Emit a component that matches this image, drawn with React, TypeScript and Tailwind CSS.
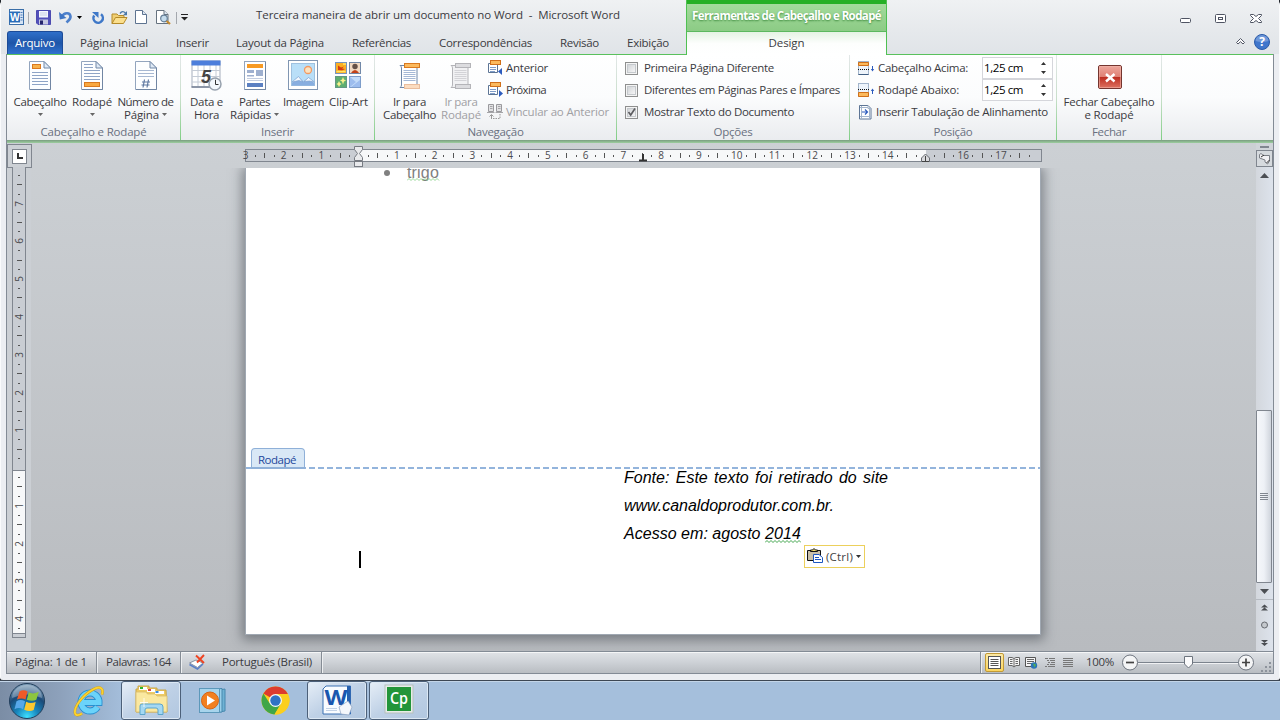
import { useLayoutEffect, useRef, type ReactNode } from "react";

/** One line of text whose letter spacing is adjusted to span `w` pixels. */
function Fit({ w, className = "", children }: { w: number; className?: string; children: string }) {
  const ref = useRef<HTMLSpanElement>(null);
  useLayoutEffect(() => {
    const el = ref.current;
    if (!el) return;
    el.style.letterSpacing = "0px";
    const natural = el.getBoundingClientRect().width;
    el.style.letterSpacing = `${(w - natural) / children.length}px`;
  }, [w, children]);
  return (
    <span ref={ref} className={`inline-block whitespace-pre ${className}`}>
      {children}
    </span>
  );
}

function Down({ className = "text-[#666]" }: { className?: string }) {
  return (
    <svg width="5" height="3" viewBox="0 0 5 3" className={className}>
      <path d="M0 0h5L2.5 3z" fill="currentColor" />
    </svg>
  );
}

/* ---------- quick access icons ---------- */

function WordMini() {
  return (
    <svg width="17" height="17" viewBox="0 0 17 17">
      <rect x="1.5" y="0.5" width="14" height="15" fill="#fff" stroke="#3a6ea8" />
      <path d="M12 1h3v14h-3z" fill="#d5e3f4" />
      <path d="M12.5 3.5h2M12.5 6h2M12.5 8.500h2M12.500 11h2" stroke="#4d7fbd" />
      <rect x="1.500" y="2.500" width="10.500" height="11" fill="#2a6dba" />
      <text x="6.800" y="12" fontSize="10" fontWeight="700" fill="#fff" textAnchor="middle" fontFamily="Open Sans, sans-serif">W</text>
    </svg>
  );
}
function SaveIcon() {
  return (
    <svg width="15" height="15" viewBox="0 0 15 15">
      <path d="M.5.5h14v14H2L.5 13z" fill="#5250ba" stroke="#4c4ab0" />
      <rect x="3" y="1" width="9" height="6.500" fill="#f4f6fd" />
      <path d="M4 3h7M4 5h7" stroke="#c9cfe6" />
      <rect x="3" y="9.500" width="9" height="5" fill="#c5c7e2" />
      <rect x="4" y="10.500" width="3" height="4" fill="#24236c" />
    </svg>
  );
}
function UndoIcon() {
  return (
    <svg width="14" height="13" viewBox="0 0 14 13">
      <path d="M3 5.500C5 1.500 11 1 11.500 5.500C11.700 8.500 9 10 7.500 11.500" fill="none" stroke="#4d80cb" strokeWidth="2.600" />
      <path d="M0 1l.8 7.500L7.500 7z" fill="#3f75c4" />
    </svg>
  );
}
function RedoIcon() {
  return (
    <svg width="14" height="14" viewBox="0 0 14 14">
      <path d="M10 3.300A4.700 4.700 0 1 1 3.200 4.500" fill="none" stroke="#3f78c8" strokeWidth="2.500" />
      <path d="M1 1h6.500v6z" fill="#3f78c8" />
    </svg>
  );
}
function OpenIcon() {
  return (
    <svg width="17" height="15" viewBox="0 0 17 15">
      <path d="M1 13.500V4h5l1.500 1.500H13V8" fill="#f0cf73" stroke="#b58a29" />
      <path d="M1 13.500L4.500 7.500H16L12.500 13.500z" fill="#fbdf8d" stroke="#b58a29" />
      <path d="M9 3.500Q11.500 0 14.500 3" fill="none" stroke="#4b78a8" strokeWidth="1.300" />
      <path d="M16 1v4.200h-4z" fill="#4b78a8" />
    </svg>
  );
}
function NewIcon() {
  return (
    <svg width="12" height="15" viewBox="0 0 12 15">
      <path d="M.5.5h7L11.500 4.500v9H.5z" fill="#fff" stroke="#5d7390" />
      <path d="M7.500.5v4h4" fill="#dce6f1" stroke="#5d7390" />
    </svg>
  );
}
function PreviewIcon() {
  return (
    <svg width="15" height="15" viewBox="0 0 15 15">
      <path d="M.5.5h7.500L12 4.500v9H.5z" fill="#fff" stroke="#66727f" />
      <path d="M8 .5v4h4" fill="#dce6f1" stroke="#66727f" />
      <circle cx="8" cy="8.500" r="3.300" fill="#c5dced" stroke="#647e97" strokeWidth="1.200" />
      <path d="M10.500 11l3.500 3" stroke="#c48a2f" strokeWidth="2.300" />
    </svg>
  );
}

/* ---------- ribbon icons ---------- */

function PageIcon({ kind }: { kind: "head" | "foot" | "num" }) {
  return (
    <svg width="24" height="31" viewBox="0 0 24 31">
      <path d="M1.500 1.500H16l6.500 6.500v21.500h-21z" fill="#fdfeff" stroke="#93a5be" />
      <path d="M22.500 8v21.500H2" fill="none" stroke="#7186a3" />
      <path d="M16 1.500V8h6.500z" fill="#dfe9f5" stroke="#7389a7" />
      {kind === "head" && (
        <>
          <rect x="4.500" y="4.500" width="8" height="4" fill="#f9b24b" stroke="#d97a20" />
          <path d="M4 12.500h16M4 15.500h16M4 18.500h16M4 21.500h16M4 24.500h16" stroke="#8ea4c6" />
        </>
      )}
      {kind === "foot" && (
        <>
          <path d="M4 4.500h9M4 7.500h9M4 10.500h16M4 13.500h16M4 16.500h16M4 19.500h16" stroke="#8ea4c6" />
          <rect x="4.500" y="22.500" width="15" height="4" fill="#f9a840" stroke="#d97a20" />
        </>
      )}
      {kind === "num" && (
        <>
          <path d="M4 10.500h16M4 13.500h16M4 16.500h16" stroke="#a7b8d2" />
          <path d="M10.500 19.500l-1.500 8M14.500 19.500l-1.500 8M8 22h8M7.500 25h8" stroke="#6079a1" strokeWidth="1.200" />
        </>
      )}
    </svg>
  );
}
function CalendarIcon() {
  return (
    <svg width="31" height="31" viewBox="0 0 31 31">
      <rect x="1" y="1" width="28" height="26" fill="#fff" stroke="#a5aebc" />
      <path d="M1 10.500h28M1 16.500h28M1 22h28M7 5v22M13 5v22M19 5v22M25 5v22" stroke="#c5ccd6" />
      <path d="M.5.5h29v5H.5z" fill="#4d7edb" />
      <path d="M.5 27h20" stroke="#68748a" strokeWidth="1.300" />
      <text x="15" y="22.500" fontSize="18" fontWeight="700" fontStyle="italic" fill="#444" textAnchor="middle" fontFamily="Liberation Sans, sans-serif">5</text>
      <circle cx="24" cy="24" r="6" fill="#f3f8fc" stroke="#97a1ad" strokeWidth="1.500" />
      <path d="M24.500 19.800V24.500h3" fill="none" stroke="#333" />
    </svg>
  );
}
function PartsIcon() {
  return (
    <svg width="24" height="31" viewBox="0 0 24 31">
      <rect x="1.500" y="1.500" width="21" height="28" fill="#fff" stroke="#93a5be" />
      <path d="M22.500 2v27.500H2" fill="none" stroke="#7186a3" />
      <rect x="4" y="4" width="16" height="4" fill="#f79a24" />
      <path d="M4 10h7v3H4zM4 15h7v1.500H4zM13 10h7v6h-7z" fill="#9fb0cf" />
      <path d="M4 18.500h16M4 20.500h16" stroke="#c3cde0" />
      <rect x="4" y="23" width="16" height="4" fill="#5b80c2" />
    </svg>
  );
}
function ImageIcon() {
  return (
    <svg width="31" height="31" viewBox="0 0 31 31">
      <rect x=".5" y=".5" width="29" height="29" fill="#fff" stroke="#8096b2" />
      <rect x="3.500" y="3.500" width="23" height="22" fill="#b9dff8" stroke="#9fc1df" />
      <circle cx="20" cy="10" r="3.500" fill="#fbe3c0" stroke="#f39a62" strokeWidth="1.300" />
      <path d="M4 23l6.500-6 5 4.500 5-4 6 6v2H4z" fill="#88aee0" />
      <path d="M4 22l6.500-5.500 4.500 5.500-4-1.500zM16 21.500l4.500-4 6 4.500-5-1z" fill="#f2f8fe" stroke="#7ba0d0" strokeWidth=".7" />
    </svg>
  );
}
function ClipArtIcon() {
  return (
    <svg width="27" height="27" viewBox="0 0 27 27">
      <rect x=".5" y=".5" width="11" height="11" fill="#fbae22" stroke="#7794bd" />
      <path d="M3 3.500l3 2 3-1-2 2 3 .5-3 1.500-4-.5z" fill="#d43c13" />
      <path d="M1.500 9.500h9M8 2h3" stroke="#ffe464" strokeWidth="1.500" />
      <rect x="14.500" y=".5" width="11" height="11" fill="#f2d9c2" stroke="#7188a8" />
      <circle cx="20" cy="4.500" r="2.700" fill="#655047" />
      <path d="M16 11q4-6 8 0z" fill="#c34218" />
      <rect x=".5" y="14.500" width="11" height="11" fill="#5fae70" stroke="#629884" />
      <path d="M8 15l1 2.500 2 1-2 1-1 3-1-3-2-1 2-1zM4 19l1 2 1.500 1-1.500 1-1 2-1-2-1.500-1 1.500-1z" fill="#f9f28c" />
      <rect x="14.500" y="14.500" width="11" height="11" fill="#c3dcf9" stroke="#7d9dca" />
      <path d="M15 15l6 5-6 5zM25 18v7h-9z" fill="#9dbdee" />
    </svg>
  );
}
function GoIcon({ off }: { off?: boolean }) {
  const [line, edge, bar, fill] = off
    ? ["#cbcbcf", "#b4b4b8", "#b4b4b8", "#dcdcdf"]
    : ["#8fa7cb", "#6e87a8", "#d97a20", "#fbb95d"];
  return (
    <svg width="22" height="28" viewBox="0 0 22 28">
      <path d="M1 2.500h17v22H1q1.500-1 1.500-2.500V5Q2.500 3.500 1 2.500z" fill={off ? "#f1f1f3" : "#fff"} stroke={edge} />
      <rect x="5.500" y=".5" width="15" height="4" fill={fill} stroke={bar} />
      <rect x="5.500" y="21.500" width="15" height="4" fill={off ? fill : "#fbdcc0"} stroke={off ? bar : "#e9bd9d"} />
      <path d="M4.500 7.500h12M4.500 9.500h12M4.500 11.500h12M4.500 13.500h12M4.500 15.500h12M4.500 17.500h12" stroke={line} strokeWidth=".8" />
    </svg>
  );
}
function StepIcon({ dir }: { dir: "prev" | "next" }) {
  return (
    <svg width="16" height="16" viewBox="0 0 16 16">
      <path d="M1.500 3.500h9v9h-9z" fill="#fff" stroke="#5d7595" />
      <path d="M3 7.500h6M3 9.500h6M3 11.500h5" stroke="#7e9cc8" />
      <rect x="3.500" y=".5" width="10" height="4" fill="#fbb95d" stroke="#d0701a" />
      <path d={dir === "prev" ? "M15 8v7l-4-3.500z" : "M12 8v7l4-3.500z"} fill="#2c5bbd" />
    </svg>
  );
}
function LinkIcon() {
  return (
    <svg width="17" height="16" viewBox="0 0 17 16">
      <path d="M1.500.5h5v7h-5zM9.500.5h5v7h-5z" fill="#e2e2e4" stroke="#9a9a9e" />
      <path d="M3 2.500h2.500M3 4.500h2.500M11 2.500h2.500M11 4.500h2.500M0 8.500h7.500M8.500 8.500H16" stroke="#a5a5a8" />
      <path d="M4.500 15v-4M2.500 12.500l2-2 2 2" fill="none" stroke="#999" />
      <path d="M6 14.500h7V10" fill="none" stroke="#999" strokeDasharray="1.500 1" />
    </svg>
  );
}
function DistIcon({ kind }: { kind: "top" | "bottom" }) {
  return (
    <svg width="17" height="15" viewBox="0 0 17 15">
      <rect x=".5" y=".5" width="10" height="13" fill="#eef4fb" stroke="#a3b5cc" />
      {kind === "top" ? (
        <>
          <path d="M.5 1.500h10v3H.5z" fill="#fbb95d" stroke="#d0701a" />
          <path d="M.5 13.500h10" stroke="#3f5d82" />
        </>
      ) : (
        <path d="M.5 9.500h10v4H.5z" fill="#fbb95d" stroke="#d0701a" />
      )}
      <path d={kind === "top" ? "M0 8.500h12" : "M0 6.500h12"} stroke="#111" strokeDasharray="1 1" />
      <path d={kind === "top" ? "M14.500 5v4" : "M14.500 7v4"} stroke="#2c5bbd" />
      <path d={kind === "top" ? "M12.800 8h3.400l-1.700 2.500z" : "M12.800 8h3.400L14.500 5.500z"} fill="#2c5bbd" />
    </svg>
  );
}
function TabAlignIcon() {
  return (
    <svg width="13" height="15" viewBox="0 0 13 15">
      <path d="M.5.5h8.500l3 3v10.500H.5z" fill="#fff" stroke="#5d7595" />
      <path d="M9 .5v3h3M2.500 1v13M10.500 3v11M1 2.500h8M1 11.500h11" fill="none" stroke="#a3b5cc" />
      <path d="M3 7h5M6 4.500l2.500 2.500L6 9.500" fill="none" stroke="#2c5bbd" strokeWidth="1.200" />
    </svg>
  );
}
function CloseBig() {
  return (
    <svg width="24" height="24" viewBox="0 0 24 24" className="ml-px">
      <defs>
        <linearGradient id="cl" x1="0" y1="0" x2="0" y2="1">
          <stop offset="0" stopColor="#eda89e" />
          <stop offset=".5" stopColor="#df7f72" />
          <stop offset=".52" stopColor="#bd2f22" />
          <stop offset="1" stopColor="#df7563" />
        </linearGradient>
      </defs>
      <rect x=".5" y=".5" width="23" height="23" rx="1.500" fill="url(#cl)" stroke="#74352f" />
      <rect x="1.500" y="1.500" width="21" height="21" fill="none" stroke="#f2b5aa" strokeOpacity=".6" />
      <path d="M8 9l8.500 7.500M16.500 9L8 16.500" stroke="#fff" strokeWidth="2.400" />
    </svg>
  );
}

/* ---------- ribbon pieces ---------- */

function Group({ label, lw, className, children }: { label: string; lw: number; className: string; children: ReactNode }) {
  return (
    <div className={`flex h-[85px] shrink-0 ${className}`}>
      <div className="flex min-w-0 flex-1 flex-col">
        <div className="flex h-[69px]">{children}</div>
        <div className="flex h-4 justify-center leading-4 text-[#6a7080]">
          <Fit w={lw}>{label}</Fit>
        </div>
      </div>
      <div className="w-px bg-linear-to-b from-[#e3e7e8] via-[#c9dfcb] to-[#7fce84]" />
    </div>
  );
}

function Big({
  icon, a, aw, b, bw, arrow, className, off, pt = "pt-[5px]",
}: {
  icon: ReactNode; a: string; aw: number; b?: string; bw?: number; arrow?: boolean; className: string; off?: boolean; pt?: string;
}) {
  return (
    <div className={`flex shrink-0 flex-col items-center ${off ? "text-[#a0a0a4]" : "text-[#3b3b3f]"} ${className}`}>
      <div className={`flex h-10 flex-col items-center ${pt}`}>{icon}</div>
      <div className="h-[13px] leading-[13px]"><Fit w={aw}>{a}</Fit></div>
      <div className="flex h-[13px] items-center gap-[3px] leading-[13px]">
        {b && <Fit w={bw ?? 0}>{b}</Fit>}
        {arrow && <Down />}
      </div>
    </div>
  );
}

function Check({ on, w, children }: { on?: boolean; w: number; children: string }) {
  return (
    <div className="flex h-[22px] items-center">
      <span className="mr-1.5 flex size-[13px] items-center justify-center border border-[#8e8f8f] bg-[#f4f4f4] p-px">
        <span className="flex size-full items-center justify-center border border-[#c5c9cd] bg-linear-to-br from-[#d2d5d8] to-[#f5f5f6]">
          {on && (
            <svg width="8" height="8" viewBox="0 0 8 8" className="shrink-0 overflow-visible">
              <path d="M.5 4l2.200 3L7 .5" fill="none" stroke="#5c5c60" strokeWidth="1.600" />
            </svg>
          )}
        </span>
      </span>
      <Fit w={w}>{children}</Fit>
    </div>
  );
}

function Spin() {
  return (
    <div className="flex h-[22px] w-[71px] items-center justify-between border border-[#d5d6db] bg-white pr-1.5 pl-px text-black">
      <Fit w={39}>1,25 cm</Fit>
      <svg width="5" height="12" viewBox="0 0 5 12" fill="#333">
        <path d="M0 3h5L2.500 0zM0 9h5l-2.500 3z" />
      </svg>
    </div>
  );
}

/* ---------- rulers ---------- */

const H_TICKS = ["3", "2", "1", "", "1", "2", "3", "4", "5", "6", "7", "8", "9", "10", "11", "12", "13", "14", "", "16", "17"];
const V_TICKS = ["", "7", "6", "5", "4", "3", "2", "1", "", "1", "2", "3", "4"];

function HRuler() {
  return (
    <div className="relative h-[13px] w-[797px] border border-[#80868f] bg-[#c9cdd3] text-[10px] text-[#4a4a4e]">
      <div className="ml-[113px] h-full w-[567px] bg-[#f7f8f9]" />
      <div className="absolute top-0 left-[-5px] flex h-[11px] items-center">
        {H_TICKS.map((t, i) => (
          <div key={i} className="flex h-full w-[37.77px] items-center">
            <span className="flex w-[9.443px] justify-center leading-[11px]">{t}</span>
            <span className="flex w-[9.443px] justify-center"><i className="h-0.5 w-px bg-[#555]" /></span>
            <span className="flex w-[9.443px] justify-center"><i className="h-[5px] w-px bg-[#555]" /></span>
            <span className="flex w-[9.443px] justify-center"><i className="h-0.5 w-px bg-[#555]" /></span>
          </div>
        ))}
      </div>
      <svg width="11" height="22" viewBox="0 0 11 22" className="absolute -top-1 left-[107px]">
        <path d="M1.500.5h8v3L6.500 7.500l3 4v3h-8v-3l3-4-3-4z" fill="#e9eaec" stroke="#777b82" />
        <rect x="1.500" y="15.500" width="8" height="5" fill="#e9eaec" stroke="#777b82" />
      </svg>
      <svg width="9" height="8" viewBox="0 0 9 8" className="absolute top-[4px] left-[392.500px]">
        <path d="M4 0v7M0 6.500h8" stroke="#333" strokeWidth="2" />
      </svg>
      <svg width="9" height="10" viewBox="0 0 9 10" className="absolute top-[3px] left-[675px]">
        <path d="M.5 8.500V5l4-4 4 4v3.500z" fill="#d9dadd" stroke="#666a70" />
        <path d="M4.500 3v5M1 8.500h7" stroke="#444" />
      </svg>
    </div>
  );
}

function VRuler() {
  return (
    <div className="relative flex h-[471px] w-3.5 flex-col border border-t-0 border-[#80868f] bg-[#c9cdd3] text-[10px] text-[#4a4a4e]">
      <div className="h-[304px] border-b border-[#80868f]" />
      <div className="h-[163px] border-b border-[#80868f] bg-[#f7f8f9]" />
      <div className="absolute top-0 left-0 h-[467px] w-3 overflow-hidden">
        <div className="-mt-[6px] flex flex-col">
          {V_TICKS.map((t, i) => (
            <div key={i} className="flex h-[37.800px] w-3 shrink-0 flex-col items-center">
              <span className="flex h-[9.450px] w-3 items-center justify-center">{t && <b className="-rotate-90 leading-[10px] font-normal">{t}</b>}</span>
              <span className="flex h-[9.450px] items-center"><i className="h-px w-0.5 bg-[#555]" /></span>
              <span className="flex h-[9.450px] items-center"><i className="h-px w-[5px] bg-[#555]" /></span>
              <span className="flex h-[9.450px] items-center"><i className="h-px w-0.5 bg-[#555]" /></span>
            </div>
          ))}
        </div>
      </div>
    </div>
  );
}

function Squiggle({ w, color }: { w: number; color: string }) {
  const pts = Array.from({ length: Math.floor(w / 2) + 1 }, (_, i) => `${i * 2},${i % 2 ? 0.5 : 2.5}`).join(" ");
  return (
    <svg width={w} height="3" viewBox={`0 0 ${w} 3`} className="absolute top-full left-0 -mt-[3px]">
      <polyline points={pts} fill="none" stroke={color} strokeWidth=".9" />
    </svg>
  );
}

/* ---------- taskbar icons ---------- */

function Orb() {
  return (
    <svg width="38" height="38" viewBox="0 0 38 38">
      <defs>
        <radialGradient id="orb" cx=".5" cy=".95" r=".9">
          <stop offset="0" stopColor="#3fe0ff" />
          <stop offset=".35" stopColor="#1887bd" />
          <stop offset=".7" stopColor="#1b4a78" />
          <stop offset="1" stopColor="#7d9db8" />
        </radialGradient>
      </defs>
      <circle cx="19" cy="19" r="17.500" fill="url(#orb)" stroke="#223f5c" />
      <path d="M4 16a15 13 0 0 1 30 0q-15-7-30 0z" fill="#fff" opacity=".28" />
      <path d="M11.500 9.500q4-2.500 8 0l-2 8q-4-2-8.500 0z" fill="#ee5a28" />
      <path d="M20.800 10.300q4 2.500 10-.5l-2.500 8q-4 2-9.500 0z" fill="#8dc63f" />
      <path d="M8.500 19.200q4-2.500 8.500 0l-2 8q-4-2.500-8.500 0z" fill="#57a8ea" />
      <path d="M18.200 19.700q4 2.500 9.500.2l-2 8q-4 2.300-9.500-.2z" fill="#fdc82e" />
    </svg>
  );
}
function IeIcon() {
  return (
    <svg width="32" height="32" viewBox="0 0 32 32">
      <path d="M24.500 22A9 9 0 1 1 26 17.500H9" fill="none" stroke="#2a8fd0" strokeWidth="7" />
      <path d="M24.500 22A9 9 0 1 1 26 17.500H9" fill="none" stroke="#6bd3fa" strokeWidth="5.200" />
      <path d="M29 9.500C31 3 27 .5 20 4.500C9 10.500 1 22 2 28c.6 3 4 2.500 7 .5" fill="none" stroke="#c99a1c" strokeWidth="2.600" />
      <path d="M29 9.500C31 3 27 .5 20 4.500C9 10.500 1 22 2 28c.6 3 4 2.500 7 .5" fill="none" stroke="#fbd22e" strokeWidth="1.900" />
    </svg>
  );
}
function ExplorerIcon() {
  return (
    <svg width="33" height="31" viewBox="0 0 33 31">
      <path d="M1 4h2V1h11v2h8v2h9l1 22H1z" fill="#eecb62" stroke="#c9a649" />
      <path d="M4 2h8v3H4zM12 4h8v3h-8zM20 6h9v3h-9z" fill="#fff" />
      <path d="M5 2h3v2H5z" fill="#2db52d" />
      <path d="M13 4h3v2h-3z" fill="#d44" />
      <path d="M20.500 6h3v2h-3z" fill="#3b8be0" />
      <path d="M1 7h10l1.500 2H20l2 2h10v16H1z" fill="#fae8a0" stroke="#d9bd6c" strokeWidth=".8" />
      <path d="M5 29.500V21q0-2 2-2h18q3 0 3 3v7.500h-5V25q0-2-2-2h-9q-2 0-2 2v4.500z" fill="#a4d8f2" stroke="#5ba5cc" />
      <path d="M9 13v9M5 17.500h8" stroke="#fff" strokeOpacity=".8" />
    </svg>
  );
}
function MediaIcon() {
  return (
    <svg width="29" height="27" viewBox="0 0 29 27">
      <path d="M20 3l6-1v22l-6 1z" fill="#6fb2d4" stroke="#4688ae" />
      <path d="M17 2l6-.5v23.500l-6 .5z" fill="#9bd0ea" stroke="#4688ae" />
      <rect x=".5" y="1.500" width="20" height="24" fill="#a7d4ec" stroke="#5c98ba" />
      <circle cx="11" cy="13.500" r="8.500" fill="#f28020" stroke="#d86414" />
      <path d="M8 8.500v10l8-5z" fill="#fff" />
    </svg>
  );
}
function ChromeIcon() {
  return (
    <svg width="29" height="29" viewBox="0 0 29 29">
      <circle cx="14.500" cy="14.500" r="14" fill="#fbcf1e" />
      <path d="M14.500 14.500L2.400 7.500A14 14 0 0 1 26.800 8H14.500z" fill="#dc3b2e" />
      <path d="M2.400 7.500A14 14 0 0 0 13.500 28.500L20 17.500 14.500 14.500 8.500 17z" fill="#3fa648" />
      <path d="M14.500 8h12.300A14 14 0 0 1 13.500 28.500l6.500-10.500z" fill="#fbcf1e" />
      <circle cx="14.500" cy="14.500" r="6.500" fill="#f4f6f8" />
      <circle cx="14.500" cy="14.500" r="5.200" fill="#2f72c4" />
    </svg>
  );
}
function WordBig() {
  return (
    <svg width="31" height="31" viewBox="0 0 31 31">
      <path d="M4 1h24.500v28H1V4z" fill="#f9fcff" stroke="#3b70b3" />
      <path d="M25 1h3.500v28H25z" fill="#2661b0" />
      <text x="14" y="19.500" fontSize="21" fontWeight="700" fill="#1b57ae" textAnchor="middle" textLength="23" lengthAdjust="spacingAndGlyphs" fontFamily="Open Sans, sans-serif">W</text>
      <path d="M17 22l9-6 4 6-3 8-8-1z" fill="#f4f7fb" stroke="#8fa4c2" strokeWidth=".7" />
      <path d="M4 23.500h11M4 25.500h11" stroke="#c3d2e6" />
    </svg>
  );
}
function CpIcon() {
  return (
    <svg width="30" height="30" viewBox="0 0 30 30" className="-mt-1">
      <rect x="1" y="1" width="28" height="28" fill="#e7ece8" stroke="#b6c0bd" />
      <rect x="3" y="3" width="24" height="24" fill="#23953a" />
      <text x="15" y="20" fontSize="16.500" fontWeight="600" fill="#fff" textAnchor="middle" textLength="18" lengthAdjust="spacingAndGlyphs" fontFamily="Open Sans, sans-serif">Cp</text>
    </svg>
  );
}

function Task({ open, children }: { open?: boolean; children: ReactNode }) {
  return (
    <div
      className={`flex h-[39px] w-[60px] shrink-0 items-center justify-center rounded-[3px] ${
        open ? "border border-[#4c6079] bg-linear-to-br from-[#e6eef7] via-[#bfd1e6] to-[#b1c7e0] shadow-[inset_0_0_0_1px_#dce8f4]" : ""
      }`}
    >
      {children}
    </div>
  );
}

const TABS: [string, number, string][] = [
  ["Página Inicial", 68, "ml-[17px]"],
  ["Inserir", 33, "ml-[28px]"],
  ["Layout da Página", 88, "ml-[27px]"],
  ["Referências", 59, "ml-[28px]"],
  ["Correspondências", 93, "ml-[28px]"],
  ["Revisão", 39, "ml-[28px]"],
  ["Exibição", 42, "ml-[28px]"],
];

export default function App() {
  return (
    <div className="flex h-[720px] w-[1280px] flex-col overflow-hidden bg-[#20252c] font-['Open_Sans','Noto_Sans',sans-serif] text-[11.500px] text-[#3b3b3f]">
      <div className="relative flex h-[680px] flex-col rounded-t-[5px] rounded-b-[3px] border-x border-[#fafbfc] bg-[#eceef2]">
        {/* title bar */}
        <div className="flex h-[31px] shrink-0 bg-linear-to-b from-[#eff1f3] to-[#e6e9ec]">
          <div className="flex h-full w-[255px] shrink-0 items-center pt-1 pl-[7px]">
            <WordMini />
            <span className="ml-[3px] h-3 w-px bg-[#a4a8ae]" />
            <span className="ml-[7px]"><SaveIcon /></span>
            <span className="ml-2"><UndoIcon /></span>
            <span className="ml-[4px]"><Down className="text-black" /></span>
            <span className="ml-[9px]"><RedoIcon /></span>
            <span className="ml-[6px]"><OpenIcon /></span>
            <span className="ml-[7px]"><NewIcon /></span>
            <span className="ml-[9px]"><PreviewIcon /></span>
            <span className="ml-[5px] h-3 w-px bg-[#a4a8ae]" />
            <svg width="7" height="7" viewBox="0 0 7 7" className="ml-1">
              <path d="M0 .5h7" stroke="#222" /><path d="M0 3h7L3.500 6.500z" fill="#222" />
            </svg>
          </div>
          <div className="w-[364px] pt-[6px] leading-[18px]">
            <Fit w={364}>Terceira maneira de abrir um documento no Word  -  Microsoft Word</Fit>
          </div>
          <div className="mt-3 ml-auto flex h-3 items-center gap-[24px] pr-[17px]">
            <svg width="11" height="11" viewBox="0 0 11 11"><rect x=".5" y="5.500" width="10" height="4" rx="1" fill="#fff" stroke="#4f5463" /></svg>
            <svg width="11" height="9" viewBox="0 0 11 9"><rect x=".5" y=".5" width="10" height="8" rx="1" fill="#fff" stroke="#4f5463" /><rect x="3.500" y="3.500" width="4" height="2" fill="none" stroke="#4f5463" /></svg>
            <svg width="12" height="9" viewBox="0 0 12 9"><path d="M.5.5h3l2.500 2 2.500-2h3v1L8.500 4.500l3 3v1h-3L6 6.500l-2.500 2h-3v-1l3-3L.5 1.500z" fill="#fff" stroke="#4f5463" /></svg>
          </div>
        </div>
        {/* tabs */}
        <div className="flex h-[23px] shrink-0 bg-linear-to-b from-[#e6e9ec] to-[#e0e4e8] pl-[6px] leading-6">
          <div className="flex w-14 justify-center rounded-t-[3px] border border-b-0 border-[#1c4b98] bg-linear-to-b from-[#2f6fc9] via-[#1e55a8] to-[#3273d0] leading-[22px] text-white">
            <Fit w={40}>Arquivo</Fit>
          </div>
          {TABS.map(([t, w, m]) => (
            <Fit key={t} w={w} className={m}>{t}</Fit>
          ))}
          <div className="ml-auto flex items-center gap-[9px] pr-[9px] pb-0.5">
            <svg width="9" height="7" viewBox="0 0 9 7"><path d="M.5 4.500l4-4 4 4-1.500 1.500-2.500-2.300L2 6z" fill="#fff" stroke="#4f5463" /></svg>
            <svg width="16" height="16" viewBox="0 0 16 16">
              <circle cx="8" cy="8" r="7.500" fill="#3f76cc" stroke="#2c5ba8" />
              <path d="M1.500 7a6.500 6 0 0 1 13 0q-6 2-13 0z" fill="#fff" opacity=".25" />
              <text x="8" y="12.300" fontSize="12" fontWeight="700" fill="#fff" textAnchor="middle" fontFamily="Open Sans, sans-serif">?</text>
            </svg>
          </div>
        </div>

        {/* contextual tab, laid over the title and tab rows */}
        <div className="absolute top-0 left-[685px] flex h-[55px] w-[201px] flex-col border-x border-[#4fc052]">
          <div className="h-1 bg-[#25b025]" />
          <div className="flex h-[28px] justify-center border-b border-[#5cb85f] bg-linear-to-b from-[#a3db9c] to-[#8ccb85] leading-6 font-bold text-white [text-shadow:0_1px_2px_#3e8a3e]">
            <Fit w={189}>Ferramentas de Cabeçalho e Rodapé</Fit>
          </div>
          <div className="flex flex-1 justify-center bg-linear-to-b from-[#e5f3e4] via-[#fdfefd] to-white leading-[22px]">
            <Fit w={36}>Design</Fit>
          </div>
        </div>

        {/* client area */}
        <div className="mx-[5px] flex h-[620px] shrink-0 flex-col border-x border-b border-[#838b95]">
          {/* ribbon */}
          <div className="flex h-[86px] shrink-0 border-t border-[#5ac15d] bg-linear-to-b from-white via-[#fbfcfd] via-50% to-[#eaecef]">
            <Group label="Cabeçalho e Rodapé" lw={106} className="w-[174px]">
              <Big className="w-[66px]" icon={<PageIcon kind="head" />} a="Cabeçalho" aw={53} arrow />
              <Big className="w-[38px]" icon={<PageIcon kind="foot" />} a="Rodapé" aw={40} arrow />
              <Big className="w-[69px]" icon={<PageIcon kind="num" />} a="Número de" aw={56} b="Página" bw={35} arrow />
            </Group>
            <Group label="Inserir" lw={33} className="w-[194px]">
              <Big className="w-[51px]" icon={<CalendarIcon />} a="Data e" aw={33} b="Hora" bw={25} />
              <Big className="w-[45px]" icon={<PartsIcon />} a="Partes" aw={31} b="Rápidas" bw={41} arrow />
              <Big className="w-[53px]" icon={<ImageIcon />} a="Imagem" aw={41} />
              <Big className="w-[37px]" icon={<ClipArtIcon />} pt="pt-[7px]" a="Clip-Art" aw={39} />
            </Group>
            <Group label="Navegação" lw={56} className="w-[242px]">
              <Big className="w-[69px]" icon={<GoIcon />} pt="pt-2" a="Ir para" aw={33} b="Cabeçalho" bw={53} />
              <Big className="w-[34px]" icon={<GoIcon off />} pt="pt-2" a="Ir para" aw={33} b="Rodapé" bw={40} off />
              <div className="flex flex-col pt-0.5 pl-[9px]">
                <div className="flex h-[22px] items-center gap-[3px]"><StepIcon dir="prev" /><Fit w={42}>Anterior</Fit></div>
                <div className="flex h-[22px] items-center gap-[3px]"><StepIcon dir="next" /><Fit w={40}>Próxima</Fit></div>
                <div className="flex h-[22px] items-center gap-0.5 text-[#a0a0a4]"><LinkIcon /><Fit w={103}>Vincular ao Anterior</Fit></div>
              </div>
            </Group>
            <Group label="Opções" lw={39} className="w-[233px]">
              <div className="flex flex-col pt-0.5 pl-2">
                <Check w={130}>Primeira Página Diferente</Check>
                <Check w={196}>Diferentes em Páginas Pares e Ímpares</Check>
                <Check on w={150}>Mostrar Texto do Documento</Check>
              </div>
            </Group>
            <Group label="Posição" lw={39} className="w-[207px]">
              <div className="flex flex-col pt-0.5 pl-2">
                <div className="flex h-[22px] items-center">
                  <span className="flex w-[124px] items-center gap-[3px]"><DistIcon kind="top" /><Fit w={90}>Cabeçalho Acima:</Fit></span>
                  <Spin />
                </div>
                <div className="flex h-[22px] items-center">
                  <span className="flex w-[124px] items-center gap-[3px]"><DistIcon kind="bottom" /><Fit w={81}>Rodapé Abaixo:</Fit></span>
                  <Spin />
                </div>
                <div className="flex h-[22px] items-center gap-1 pl-px"><TabAlignIcon /><Fit w={172}>Inserir Tabulação de Alinhamento</Fit></div>
              </div>
            </Group>
            <Group label="Fechar" lw={34} className="w-[105px]">
              <Big className="w-[104px]" icon={<CloseBig />} pt="pt-2.5" a="Fechar Cabeçalho" aw={91} b="e Rodapé" bw={49} />
            </Group>
          </div>
          <div className="h-[3px] shrink-0 bg-linear-to-b from-[#7a9c80] to-[#9ccf9f]" />

          {/* document area */}
          <div className="flex h-[508px] shrink-0 bg-linear-to-b from-[#ccd0d4] to-[#b8bbbf]">
            <div className="flex w-6 flex-col bg-[#cbcfd4]">
              <div className="mt-px flex h-6 w-[25px] items-center justify-center border border-[#80868f] bg-[#ccd0d5]">
                <div className="flex size-[15px] items-center justify-center border border-[#80868f] bg-white">
                  <svg width="6" height="6" viewBox="0 0 6 6"><path d="M1 0v5h5" fill="none" stroke="#333" strokeWidth="2" /></svg>
                </div>
              </div>
              <div className="-mt-px pl-[5px]"><VRuler /></div>
            </div>
            <div className="flex flex-1 flex-col overflow-hidden">
              <div className="z-10 h-[25px] shrink-0 pt-[6px] pl-[214px]"><HRuler /></div>
              <div className="flex-1 overflow-hidden pl-[214px]">
                <div className="relative flex h-[467px] w-[796px] flex-col border border-t-0 border-[#a0a8b2] bg-white font-['Liberation_Sans',Arial,sans-serif] text-[16px] text-black shadow-[0_2px_11px_3px_rgba(55,62,70,0.5)]">
                  <div className="flex h-[299px] items-start pl-[138px] text-[#808080]">
                    <span className="mt-[2px] size-1.5 rounded-full bg-[#808080]" />
                    <span className="relative -mt-[5px] ml-[17px] h-[18px] leading-[19px]">
                      <Fit w={32}>trigo</Fit>
                      <Squiggle w={33} color="#8fd48f" />
                    </span>
                  </div>
                  <div className="h-0.5 shrink-0 bg-[repeating-linear-gradient(90deg,#93b4dc_0_6px,transparent_6px_9px)]" />
                  <div className="flex flex-col pl-[378px] italic">
                    <div className="flex h-6 w-[264px] justify-between leading-[17px] whitespace-nowrap">
                      {["Fonte:", "Este", "texto", "foi", "retirado", "do", "site"].map((t) => <span key={t}>{t}</span>)}
                    </div>
                    <div className="mt-[-5px] h-7 leading-[36px]"><Fit w={210}>www.canaldoprodutor.com.br.</Fit></div>
                    <div className="h-7 leading-[36px]">
                      <Fit w={141}>Acesso em: agosto </Fit>
                      <span className="relative inline-block h-[18px] leading-[18px]">
                        <Fit w={36}>2014</Fit>
                        <Squiggle w={36} color="#2f9c3c" />
                      </span>
                    </div>
                  </div>
                  <div className="absolute top-[280px] left-[5px] flex h-[21px] w-[54px] items-center rounded-t-[4px] border border-b-2 border-[#8fb0d8] bg-[#d9e8f6] pt-[3px] pl-1.5 font-['Open_Sans',sans-serif] text-[11.500px] text-[#1f489c]">
                    <Fit w={38}>Rodapé</Fit>
                  </div>
                  <div className="absolute top-[383px] left-[113px] h-[17px] w-0.5 bg-black" />
                  <div className="absolute top-[377px] left-[558px] flex h-[23px] w-[61px] items-center border border-[#ecd05c] bg-white pl-0.5 font-['Open_Sans',sans-serif] text-[11.500px] text-[#444]">
                    <svg width="16" height="16" viewBox="0 0 16 16" className="-mt-1 shrink-0">
                      <path d="M.5 3.500h13v10H.5z" fill="#c9c0a8" stroke="#111" />
                      <path d="M3.500 4.500V3h2Q7 0 8.500 3h2v1.500z" fill="#f3dc6b" stroke="#111" />
                      <path d="M6.500 7.500H12l3.500 3v5h-9z" fill="#fff" stroke="#1d57c0" />
                      <path d="M8 10.500h4M8 12.500h6" stroke="#1d57c0" />
                    </svg>
                    <span className="ml-[3px]"><Fit w={27}>(Ctrl)</Fit></span>
                    <span className="mb-px ml-[3px]"><Down className="text-[#333]" /></span>
                  </div>
                </div>
              </div>
            </div>
            {/* scrollbar column */}
            <div className="flex w-[17px] shrink-0 flex-col items-center bg-linear-to-r from-[#d3d7dd] to-[#dde3ec]">
              <div className="flex h-[7px] w-full shrink-0 items-center justify-center bg-[#d0d4d9]"><span className="h-0.5 w-[9px] bg-[#80868f]" /></div>
              <div className="flex h-[17px] w-full shrink-0 items-center justify-center border border-[#80868f] bg-[#d6dade]">
                <svg width="12" height="12" viewBox="0 0 12 12">
                  <path d="M.5 1.500L2 .5l2.500 2h6v5.500l-2 3-2.500-2V7L.5 5z" fill="#f2f1f4" stroke="#7b7f86" />
                  <path d="M2 4l3-2M7.500 10l3-3" stroke="#333" />
                </svg>
              </div>
              <svg width="9" height="5" viewBox="0 0 9 5" className="mt-[6px] shrink-0"><path d="M0 5h9L4.500 0z" fill="#4b4e53" /></svg>
              <div className="mt-[232px] flex h-[173px] w-4 shrink-0 flex-col items-center justify-center gap-px self-start rounded-[1px] border border-[#80868f] bg-linear-to-r from-[#f5f7fa] via-[#eef1f6] to-[#cfd4dc]">
                {[0, 1, 2, 3].map((i) => <i key={i} className="h-px w-2 bg-[#80868f]" />)}
              </div>
              <svg width="9" height="5" viewBox="0 0 9 5" className="mt-[6px] shrink-0"><path d="M0 0h9L4.500 5z" fill="#4b4e53" /></svg>
              <div className="mt-[5px] h-px w-full shrink-0 bg-[#b6bbc2]" />
              <svg width="7" height="42" viewBox="0 0 7 42" className="mt-1 shrink-0">
                <path d="M0 3.500h7L3.500.5zM0 6.500h7l-3.500-3zM0 36h7l-3.500 3zM0 39h7l-3.500 3z" fill="#4b4e53" />
                <circle cx="3.500" cy="21" r="3" fill="#c4c8cd" stroke="#666a70" />
              </svg>
            </div>
          </div>

          {/* status bar */}
          <div className="flex h-[22px] shrink-0 items-center border-t border-[#838b95] bg-linear-to-b from-[#e0e3e7] via-[#cdd1d6] to-[#b9bdc2] shadow-[inset_0_1px_0_#f5f6f7]">
            <span className="w-[89px] pb-0.5 pl-2"><Fit w={72}>Página: 1 de 1</Fit></span>
            <span className="h-full w-0.5 border-l border-[#858c95] bg-[#edeff1]" />
            <span className="w-[82px] pb-0.5 pl-[8px]"><Fit w={65}>Palavras: 164</Fit></span>
            <span className="h-full w-0.5 border-l border-[#858c95] bg-[#edeff1]" />
            <svg width="17" height="16" viewBox="0 0 17 16" className="-mt-0.5 ml-[7px]">
              <path d="M.5 9L7 6l7 3-5.500 4.500z" fill="#fff" stroke="#8791a3" />
              <path d="M.5 10.500L8.500 15 14 10" fill="none" stroke="#5a80c8" strokeWidth="1.500" />
              <path d="M7 1.500l8 7.500M15 1L8 8.500" stroke="#ee4423" strokeWidth="1.900" />
            </svg>
            <span className="ml-4 w-[99px] pb-0.5"><Fit w={90}>Português (Brasil)</Fit></span>
            <span className="h-full w-0.5 border-l border-[#858c95] bg-[#edeff1]" />
            <span className="ml-auto h-full w-0.5 border-l border-[#858c95] bg-[#edeff1]" />
            <span className="ml-[3px] flex h-[19px] w-[19px] items-center justify-center rounded-[2px] border border-[#c29a35] bg-linear-to-b from-[#fce9a4] to-[#fbd55e]">
              <svg width="13" height="13" viewBox="0 0 13 13" className="shrink-0"><rect x=".5" y=".5" width="12" height="12" fill="#fff" stroke="#555" /><path d="M2.500 3.500h8M2.500 5.500h8M2.500 7.500h8M2.500 9.500h8" stroke="#555" /></svg>
            </span>
            <svg width="12" height="12" viewBox="0 0 12 12" className="ml-1">
              <path d="M.5.5h3.500L6 1.500l2-1h3.500v8H8l-2 1.500-2-1.500H.5z" fill="#f5f5f6" stroke="#666" />
              <path d="M6 1.500v8M2 2.500h2.500M2 4.500h2.500M2 6.500h2.500M7.500 2.500H10M7.500 4.500H10M7.500 6.500H10" stroke="#666" />
            </svg>
            <svg width="13" height="12" viewBox="0 0 13 12" className="ml-[5px]">
              <path d="M.5.5h10v9H.5z" fill="#f5f5f6" stroke="#555" /><path d="M2 2.500h7M2 4.500h7M2 6.500h5" stroke="#666" />
              <circle cx="9" cy="8.500" r="3.200" fill="#2b75b8" /><path d="M8 6.500l3 1-1.500 3z" fill="#56b34f" />
            </svg>
            <svg width="10" height="10" viewBox="0 0 10 10" className="ml-[7px]"><path d="M0 .5h3M4 .5h6M2 2.500h2M5 2.500h5M3 4.500h2M6 4.500h4M2 6.500h2M5 6.500h5M0 8.500h2M3 8.500h7" stroke="#777" /></svg>
            <svg width="10" height="10" viewBox="0 0 10 10" className="ml-2"><path d="M0 .5h10M0 2.500h10M0 4.500h10M0 6.500h10M0 8.500h10" stroke="#777" /></svg>
            <span className="ml-[13px] w-[35px] pb-0.5"><Fit w={28}>100%</Fit></span>
            <svg width="134" height="17" viewBox="0 0 134 17" className="shrink-0">
              <path d="M17 8.500h101" stroke="#7b838d" /><path d="M17 9.500h101" stroke="#f0f1f3" />
              <circle cx="9" cy="8.500" r="7.500" fill="#f4f5f6" stroke="#6d747e" /><path d="M5 8.500h8" stroke="#444" strokeWidth="1.700" />
              <circle cx="125" cy="8.500" r="7.500" fill="#f4f5f6" stroke="#6d747e" /><path d="M121 8.500h8M125 4.500v8" stroke="#444" strokeWidth="1.700" />
              <path d="M63.500 2.500h8v7.500l-4 4-4-4z" fill="#fbfbfc" stroke="#6d747e" />
            </svg>
            <svg width="12" height="11" viewBox="0 0 12 11" className="mt-auto ml-[6px] shrink-0" fill="#8d939c">
              <path d="M8 0h2v2H8zM4 4h2v2H4zM8 4h2v2H8zM0 8h2v2H0zM4 8h2v2H4zM8 8h2v2H8z" />
            </svg>
          </div>
        </div>
      </div>

      {/* taskbar */}
      <div className="flex h-10 shrink-0 items-center gap-0.5 border-t border-[#3d4754] bg-[linear-gradient(90deg,#7b8da5_0,#8da1bb_60px,#a5bfdc_125px)] shadow-[inset_0_1px_0_#c3d5e8]">
        <div className="flex w-[57px] items-center justify-start pl-2"><Orb /></div>
        <Task><IeIcon /></Task>
        <Task open><ExplorerIcon /></Task>
        <Task><MediaIcon /></Task>
        <Task><ChromeIcon /></Task>
        <Task open><WordBig /></Task>
        <Task open><CpIcon /></Task>
      </div>
    </div>
  );
}
